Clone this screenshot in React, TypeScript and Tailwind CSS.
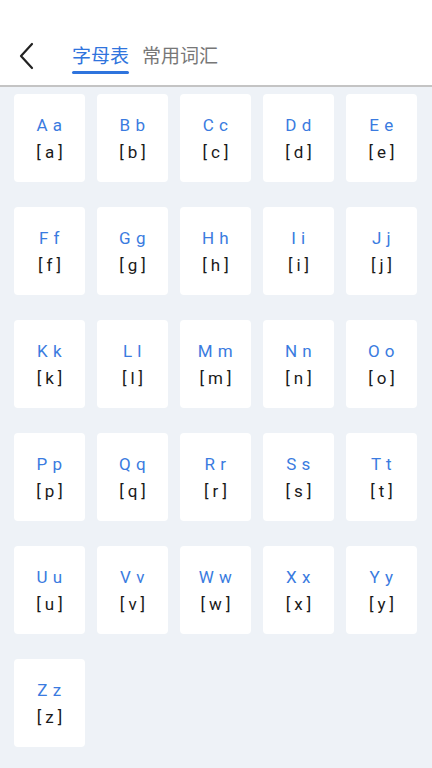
const letters = 'abcdefghijklmnopqrstuvwxyz'.split('');

function LetterCard({ ch }: { ch: string }) {
  return (
    <div className="flex h-[88px] w-[71px] flex-col items-center justify-center rounded-[4px] bg-white">
      <div className="text-[17px] leading-[22px] tracking-[0.5px] text-[#3a7be0]">
        {ch.toUpperCase()} {ch}
      </div>
      <div className="mt-[5px] pl-[4px] text-[17px] leading-[22px] tracking-[4px] text-[#1a1a1a]">[{ch}]</div>
    </div>
  );
}

export default function App() {
  return (
    <div className="flex h-[768px] w-[432px] flex-col overflow-hidden bg-[#eef2f7] font-['Roboto','Noto_Sans_CJK_SC',sans-serif]">
      <div className="flex h-[87px] shrink-0 items-end border-b-2 border-[#c4c4c4] bg-white pb-[11px]">
        <button className="mb-[2px] ml-[14px] flex h-[32px] w-[24px] items-center justify-center">
          <svg width="18" height="28" viewBox="0 0 18 28" fill="none">
            <path d="M15 2L4 14l11 12" stroke="#222" strokeWidth="2.2" strokeLinecap="round" strokeLinejoin="round" />
          </svg>
        </button>
        <div className="ml-[34px] flex items-end gap-[13px]">
          <div className="flex flex-col items-center">
            <span className="text-[19px] leading-[24px] text-[#2f74dd]">字母表</span>
            <div className="mt-[2px] h-[3px] w-full rounded-full bg-[#2f74dd]" />
          </div>
          <span className="pb-[5px] text-[19px] leading-[24px] text-[#777]">常用词汇</span>
        </div>
      </div>
      <div className="grid grid-cols-[repeat(5,71px)] gap-x-[12px] gap-y-[25px] pl-[14px] pt-[7px]">
        {letters.map((ch) => (
          <LetterCard key={ch} ch={ch} />
        ))}
      </div>
    </div>
  );
}
